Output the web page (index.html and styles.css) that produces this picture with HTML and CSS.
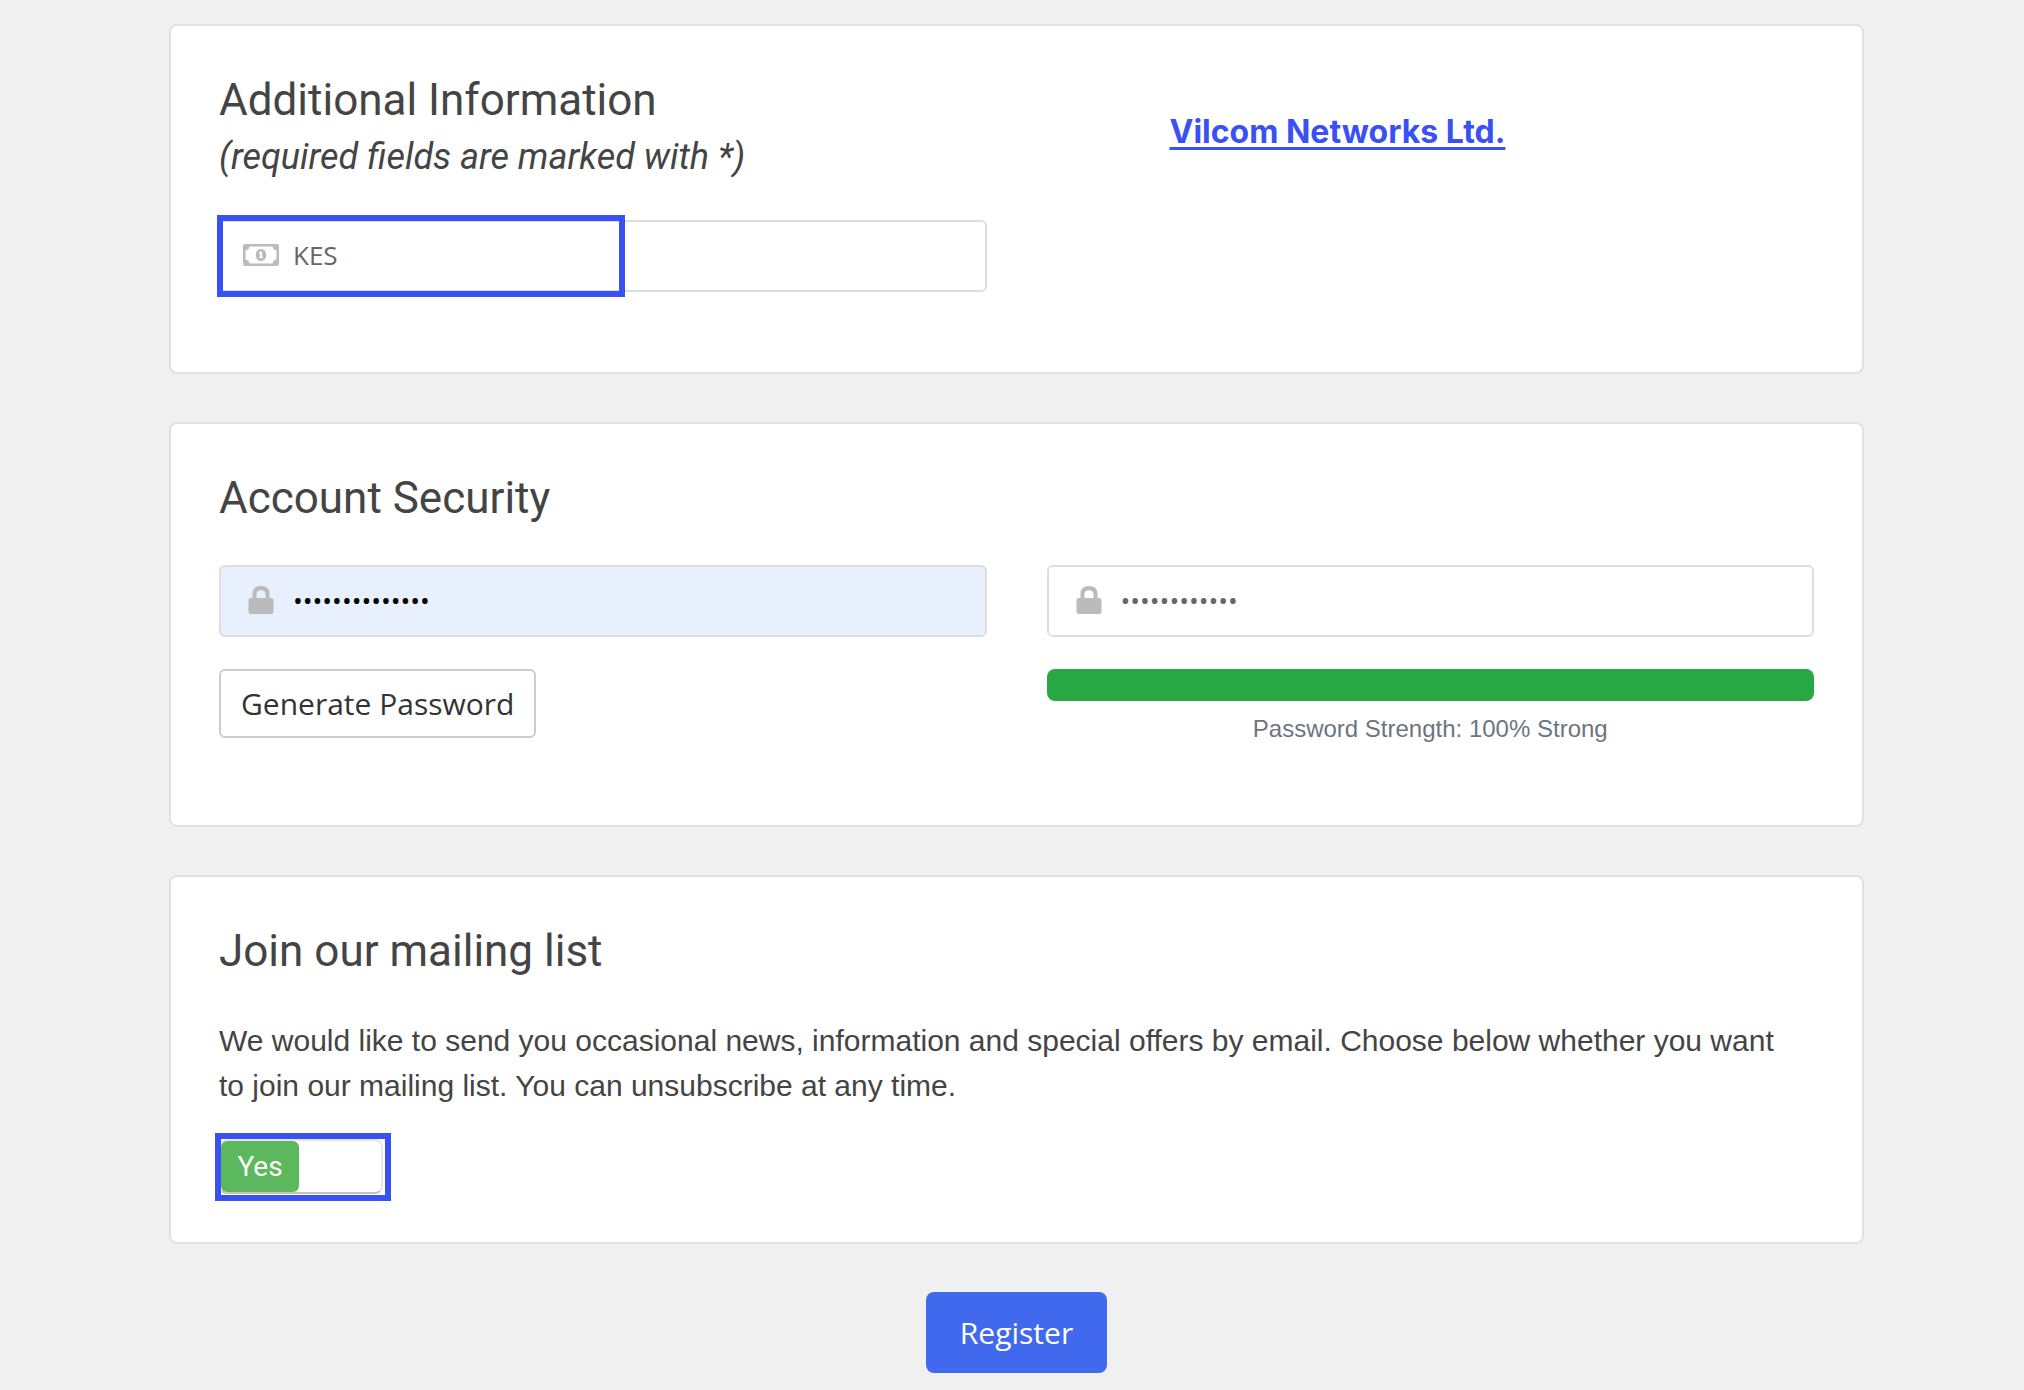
FILE: index.html
```
<!DOCTYPE html>
<html lang="en">
<head>
<meta charset="utf-8">
<meta name="viewport" content="width=device-width, initial-scale=1">
<title>Register</title>
<link rel="stylesheet" href="styles.css">
</head>
<body>
<form class="page">
  <section class="card card-fields">
    <div class="columns">
      <div>
        <h2 class="card-title">Additional Information</h2>
        <p class="card-note">(required fields are marked with *)</p>
      </div>
      <a class="brand" href="#">Vilcom Networks Ltd.</a>
    </div>
    <div class="columns">
      <div class="marked">
        <label class="field">
          <svg class="field-icon" viewBox="0 0 36 22" aria-hidden="true">
            <path fill-rule="evenodd" d="M2 0H34Q36 0 36 2V20Q36 22 34 22H2Q0 22 0 20V2Q0 0 2 0ZM6.500 2.500Q6 6 2.500 6.500V15.500Q6 16 6.500 19.500H29.500Q30 16 33.500 15.500V6.500Q30 6 29.500 2.500Z"/>
            <path fill-rule="evenodd" d="M18 5C21.200 5 23.200 7.500 23.200 11S21.200 17 18 17S12.800 14.500 12.800 11S14.800 5 18 5ZM17.500 7.500L15.900 8.500V9.700H17V12.900H16V14.100H20V12.900H19V7.500Z"/>
          </svg>
          <select class="field-input" aria-label="Currency"><option>KES</option></select>
        </label>
        <span class="mark mark-currency"></span>
      </div>
    </div>
  </section>

  <section class="card card-fields">
    <h2 class="card-title">Account Security</h2>
    <div class="columns columns-security">
      <label class="field field-filled">
        <svg class="field-icon" viewBox="0 0 36 30" aria-hidden="true">
          <path fill-rule="evenodd" d="M9.500 13V9Q9.500 1 18 1T26.500 9V13H28Q30.500 13 30.500 15.500V26.500Q30.500 29 28 29H8Q5.500 29 5.500 26.500V15.500Q5.500 13 8 13ZM13.500 13H22.500V9Q22.500 5.200 18 5.200T13.500 9Z"/>
        </svg>
        <input class="field-input" type="password" value="passwordsample" aria-label="Password" autocomplete="off">
      </label>
      <label class="field">
        <svg class="field-icon" viewBox="0 0 36 30" aria-hidden="true">
          <path fill-rule="evenodd" d="M9.500 13V9Q9.500 1 18 1T26.500 9V13H28Q30.500 13 30.500 15.500V26.500Q30.500 29 28 29H8Q5.500 29 5.500 26.500V15.500Q5.500 13 8 13ZM13.500 13H22.500V9Q22.500 5.200 18 5.200T13.500 9Z"/>
        </svg>
        <input class="field-input" type="password" value="passwordtext" aria-label="Confirm Password" autocomplete="off">
      </label>
      <div>
        <button class="button-outline" type="button">Generate Password</button>
      </div>
      <div>
        <div class="meter" role="progressbar" aria-valuenow="100" aria-valuemin="0" aria-valuemax="100" aria-labelledby="strength">
          <div class="meter-fill" style="width:100%"></div>
        </div>
        <p class="meter-text" id="strength">Password Strength: 100% Strong</p>
      </div>
    </div>
  </section>

  <section class="card">
    <h2 class="card-title">Join our mailing list</h2>
    <p class="card-text">We would like to send you occasional news, information and special offers by email. Choose below whether you want to join our mailing list. You can unsubscribe at any time.</p>
    <div class="marked marked-toggle">
      <label class="toggle">
        <input class="toggle-input" type="checkbox" checked>
        <span class="toggle-label">Yes</span>
      </label>
      <span class="mark mark-toggle"></span>
    </div>
  </section>

  <button class="button-primary" type="submit">Register</button>
</form>
</body>
</html>
```
FILE: styles.css
```
* {
  box-sizing: border-box;
}

body {
  margin: 0;
  background: #f0f0f0;
  color: #444;
  font-family: "Liberation Sans", Arial, sans-serif;
  font-size: 30px;
  line-height: 45px;
}

h2,
p {
  margin: 0;
}

.page {
  display: flex;
  flex-direction: column;
  gap: 48px;
  padding: 24px 160px 16px 169px;
}

.card {
  padding: 48px;
  background: #fff;
  border: 2px solid #e1e1e1;
  border-radius: 8px;
}

.card-fields {
  padding-bottom: 80px;
}

.columns {
  display: grid;
  grid-template-columns: 1fr 1fr;
  gap: 32px 60px;
}

.columns + .columns,
.columns-security {
  margin-top: 40px;
}

.card-title {
  font-family: Roboto, sans-serif;
  font-size: 44px;
  font-weight: 400;
  line-height: 53px;
}

.card-note {
  margin-top: 8px;
  font-family: Roboto, sans-serif;
  font-size: 36px;
  font-style: italic;
  line-height: 45px;
}

.card-text {
  margin-top: 40px;
  padding-right: 12px;
}

.brand {
  justify-self: start;
  align-self: center;
  margin-left: 123px;
  padding-top: 8px;
  color: #3850f4;
  font-family: Inter, sans-serif;
  font-size: 32px;
  font-weight: 700;
  text-decoration-thickness: 3px;
  text-underline-offset: 4px;
}

.field {
  display: flex;
  align-items: center;
  gap: 14px;
  height: 72px;
  padding: 0 0 2px 22px;
  background: #fff;
  border: 2px solid #ddd;
  border-radius: 6px;
  color: #666;
}

.field-filled {
  background: #e8effd;
  color: #000;
}

.field-icon {
  flex: none;
  width: 36px;
  fill: #bbb;
}

.field-input {
  flex: 1;
  min-width: 0;
  height: 100%;
  padding: 0;
  appearance: none;
  background: none;
  border: 0;
  outline: 0;
  color: inherit;
  font-family: "Open Sans", sans-serif;
  font-size: 26px;
}

/* Blue frames that highlight a control */
.marked {
  position: relative;
}

.mark {
  position: absolute;
  border: 6px solid #3850f4;
  pointer-events: none;
}

.mark-currency {
  top: -5px;
  bottom: -5px;
  left: -2px;
  width: 408px;
}

.button-outline {
  display: block;
  height: 69px;
  padding: 0 20px;
  background: #fff;
  border: 2px solid #ccc;
  border-radius: 6px;
  color: #333;
  font-family: "Open Sans", sans-serif;
  font-size: 30px;
}

.meter {
  height: 32px;
  overflow: hidden;
  background: #e9ecef;
  border-radius: 8px;
}

.meter-fill {
  height: 100%;
  background: #28a745;
}

.meter-text {
  margin-top: 12px;
  color: #6c757d;
  font-size: 24px;
  line-height: 32px;
  text-align: center;
}

.marked-toggle {
  width: 164px;
  margin-top: 31px;
}

.mark-toggle {
  inset: -6px -8px -7px -4px;
}

.toggle {
  display: flex;
  height: 55px;
  background: #fff;
  border: 2px solid #e6e6e6;
  border-bottom-color: #c3c3c3;
  border-radius: 8px;
}

.toggle-input {
  position: absolute;
  opacity: 0;
}

.toggle-label {
  width: 78px;
  background: #5cb85c;
  border-radius: 6px;
  color: #fff;
  font-family: Roboto, sans-serif;
  font-size: 28px;
  font-weight: 400;
  line-height: 51px;
  text-align: center;
}

.button-primary {
  align-self: center;
  height: 81px;
  padding: 0 34px;
  background: #4169ed;
  border: 0;
  border-radius: 8px;
  color: #fff;
  font-family: "Open Sans", sans-serif;
  font-size: 30px;
}
```
